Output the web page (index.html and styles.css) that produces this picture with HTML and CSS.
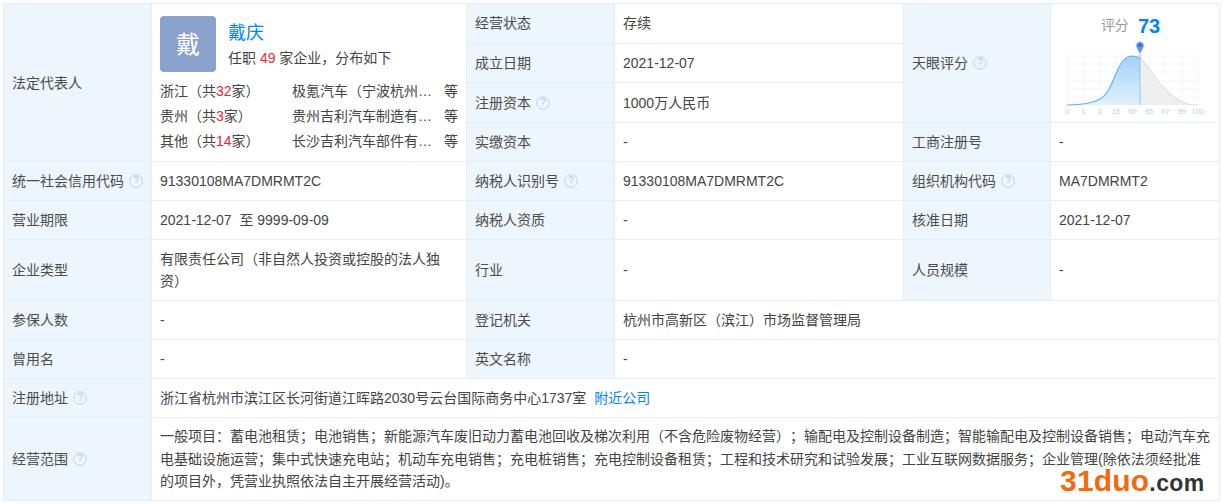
FILE: index.html
```html
<!DOCTYPE html>
<html lang="zh">
<head>
<meta charset="utf-8">
<title>工商信息</title>
<link rel="stylesheet" href="styles.css">
</head>
<body>
<table class="info">
<colgroup><col class="c1"><col class="c2"><col class="c3"><col class="c4"><col class="c5"><col class="c6"></colgroup>
<tbody>
<tr class="r40">
<th rowspan="4">法定代表人</th>
<td rowspan="4" class="legal">
  <div class="person">
    <div class="avatar">戴</div>
    <div class="pinfo">
      <div class="pname">戴庆</div>
      <div class="psub">任职 <em>49</em> 家企业，分布如下</div>
    </div>
  </div>
  <div class="dist"><span class="prov">浙江（共<em>32</em>家）</span><span class="comp">极氪汽车（宁波杭州…</span><span class="more">等</span></div>
  <div class="dist"><span class="prov">贵州（共<em>3</em>家）</span><span class="comp">贵州吉利汽车制造有…</span><span class="more">等</span></div>
  <div class="dist"><span class="prov">其他（共<em>14</em>家）</span><span class="comp">长沙吉利汽车部件有…</span><span class="more">等</span></div>
</td>
<th class="lift">经营状态</th><td class="lift">存续</td>
<th rowspan="3">天眼评分 <svg class="q" viewBox="0 0 14 14"><circle cx="7" cy="7" r="6.3"/><text x="7" y="10.2">?</text></svg></th>
<td rowspan="3" class="score">
  <div class="stitle"><span class="slabel">评分</span><b>73</b></div>
  <svg class="chart" width="148" height="80" viewBox="0 0 148 80">
    <defs>
      <linearGradient id="fill" x1="0" y1="0" x2="0" y2="1"><stop offset="0" stop-color="#a3d0fb"/><stop offset="1" stop-color="#dff3fd"/></linearGradient>
    </defs>
    <path class="grid" d="M4 16H135M4 24H135M4 32H135M4 41H135M4 49H135M4 57H135M4 16V65M20.400 16V65M36.800 16V65M53.100 16V65M69.500 16V65M85.900 16V65M102.200 16V65M118.600 16V65M135 16V65"/>
    <path class="rest" d="M77 18C85 24 92 40 104 51C111 58 118 62 125 64C130 65 132 65 135 65H77Z"/>
    <path class="restline" d="M77 18C85 24 92 40 104 51C111 58 118 62 125 64C130 65 132 65 135 65"/>
    <path class="area" d="M4 65C22 65 30 63 37 59C47 53 50 39 55 29C59 20 64 16 69 16C72 16 75 17 77 18V65Z"/>
    <path class="curve" d="M4 65C22 65 30 63 37 59C47 53 50 39 55 29C59 20 64 16 69 16C72 16 75 17 77 18"/>
    <path class="mark" d="M77 14V65"/>
    <path class="pin" d="M77 14L73.800 7.500A3.700 3.700 0 1 1 80.200 7.500Z"/>
    <circle class="pind" cx="77" cy="5" r="1.600"/>
    <g class="ticks">
      <text x="4" y="74">0</text><text x="20.400" y="74">1</text><text x="36.800" y="74">3</text><text x="53.100" y="74">15</text><text x="69.500" y="74">50</text><text x="85.900" y="74">85</text><text x="102.200" y="74">97</text><text x="118.600" y="74">99</text><text x="135" y="74">100</text>
    </g>
  </svg>
</td>
</tr>
<tr class="r39"><th>成立日期</th><td>2021-12-07</td></tr>
<tr class="r40"><th>注册资本 <svg class="q" viewBox="0 0 14 14"><circle cx="7" cy="7" r="6.3"/><text x="7" y="10.2">?</text></svg></th><td>1000万人民币</td></tr>
<tr class="r39"><th>实缴资本</th><td>-</td><th>工商注册号</th><td>-</td></tr>
<tr class="r39"><th>统一社会信用代码 <svg class="q" viewBox="0 0 14 14"><circle cx="7" cy="7" r="6.3"/><text x="7" y="10.2">?</text></svg></th><td>91330108MA7DMRMT2C</td><th>纳税人识别号 <svg class="q" viewBox="0 0 14 14"><circle cx="7" cy="7" r="6.3"/><text x="7" y="10.2">?</text></svg></th><td>91330108MA7DMRMT2C</td><th>组织机构代码 <svg class="q" viewBox="0 0 14 14"><circle cx="7" cy="7" r="6.3"/><text x="7" y="10.2">?</text></svg></th><td>MA7DMRMT2</td></tr>
<tr class="r39"><th>营业期限</th><td>2021-12-07&nbsp; 至 9999-09-09</td><th>纳税人资质</th><td>-</td><th>核准日期</th><td>2021-12-07</td></tr>
<tr class="r61"><th>企业类型</th><td>有限责任公司（非自然人投资或控股的法人独资）</td><th>行业</th><td>-</td><th>人员规模</th><td>-</td></tr>
<tr class="r39"><th>参保人数</th><td>-</td><th>登记机关</th><td colspan="3">杭州市高新区（滨江）市场监督管理局</td></tr>
<tr class="r39"><th>曾用名</th><td>-</td><th>英文名称</th><td colspan="3">-</td></tr>
<tr class="r39"><th>注册地址 <svg class="q" viewBox="0 0 14 14"><circle cx="7" cy="7" r="6.3"/><text x="7" y="10.2">?</text></svg></th><td colspan="5">浙江省杭州市滨江区长河街道江晖路2030号云台国际商务中心1737室<a class="near">附近公司</a></td></tr>
<tr class="r83"><th>经营范围 <svg class="q" viewBox="0 0 14 14"><circle cx="7" cy="7" r="6.3"/><text x="7" y="10.2">?</text></svg></th><td colspan="5" class="scope">一般项目：蓄电池租赁；电池销售；新能源汽车废旧动力蓄电池回收及梯次利用（不含危险废物经营）；输配电及控制设备制造；智能输配电及控制设备销售；电动汽车充电基础设施运营；集中式快速充电站；机动车充电销售；充电桩销售；充电控制设备租赁；工程和技术研究和试验发展；工业互联网数据服务；企业管理(除依法须经批准的项目外，凭营业执照依法自主开展经营活动)。</td></tr>
</tbody>
</table>
<div class="wm"><span class="wm1">31duo</span><span class="wm2">.com</span></div>
</body>
</html>
```
FILE: styles.css
```css
* { box-sizing: border-box; }
html, body { margin: 0; padding: 0; background: #fff; }
body {
  width: 1223px; height: 504px; overflow: hidden; position: relative;
  padding: 3px 0 0 3px;
  font-family: "Liberation Sans", "Noto Sans CJK SC", sans-serif;
  font-size: 14px; color: #444; line-height: 22px;
  text-spacing-trim: space-all;
}
.info { border-collapse: collapse; table-layout: fixed; width: 1216px; }
.c1 { width: 148px; } .c2 { width: 315px; } .c3 { width: 148px; }
.c4 { width: 289px; } .c5 { width: 147px; } .c6 { width: 169px; }
th, td { border: 1px solid #e3eef8; padding: 0 8px; vertical-align: middle; text-align: left; font-weight: 400; }
th { background: #edf5fd; color: #4c4c4c; white-space: nowrap; }
.lift { padding-bottom: 2px; }
.r39 { height: 39px; } .r40 { height: 40px; } .r61 { height: 61px; } .r83 { height: 83px; }
.q { width: 14px; height: 14px; margin-left: 1px; vertical-align: -2px; }
.q circle { fill: none; stroke: #b5d6f3; stroke-width: 1; }
.q text { font-size: 10px; fill: #a5cdf0; text-anchor: middle; font-family: "Liberation Sans", sans-serif; }
em { font-style: normal; color: #f5222d; }
.legal { padding: 12px 8px 2px; vertical-align: top; }
.person { display: flex; gap: 12px; margin-bottom: 7px; }
.avatar { width: 56px; height: 56px; border-radius: 4px; background: #8aa1ce; color: #fff; font-size: 24px; padding-top: 1px; display: flex; align-items: center; justify-content: center; }
.pinfo { padding-top: 3px; }
.pname { color: #0084ff; font-size: 18px; line-height: 28px; }
.psub { line-height: 22px; }
.dist { display: flex; line-height: 25px; }
.prov { width: 132px; }
.comp { width: 152px; white-space: nowrap; overflow: hidden; }
.more { margin-left: auto; }
.score { padding: 0 8px; vertical-align: top; }
.stitle { display: flex; justify-content: center; align-items: center; gap: 9px; height: 32px; padding-top: 11px; line-height: 26px; color: #999; font-size: 14px; padding-right: 9px; }
.slabel { position: relative; top: -1px; }
.stitle b { color: #0084ff; font-size: 20px; font-weight: 700; }
.chart { display: block; margin: 4px 0 0 4px; overflow: visible; }
.grid { stroke: #f4f5f7; stroke-width: 1; fill: none; }
.rest { fill: #efefef; }
.restline { fill: none; stroke: #e2e2e2; stroke-width: 1.2; }
.area { fill: url(#fill); }
.curve { fill: none; stroke: #6cb1f7; stroke-width: 1.2; }
.mark { stroke: #93c3f5; stroke-width: 1; }
.pin { fill: #5b94f3; }
.pind { fill: #2b5fd0; }
.ticks text { font-size: 7.500px; fill: #bccdee; text-anchor: middle; font-family: "Liberation Sans", sans-serif; }
.near { color: #0084ff; margin-left: 8px; }
.scope { line-height: 22.500px; }
.wm { position: absolute; left: 1060px; top: 464px; line-height: 34px; font-family: "Liberation Sans", sans-serif; font-weight: 700; white-space: nowrap; }
.wm1 { color: #f26a10; font-size: 30px; letter-spacing: 0.200px; }
.wm2 { color: #333; font-size: 23px; letter-spacing: 0.400px; }
```
